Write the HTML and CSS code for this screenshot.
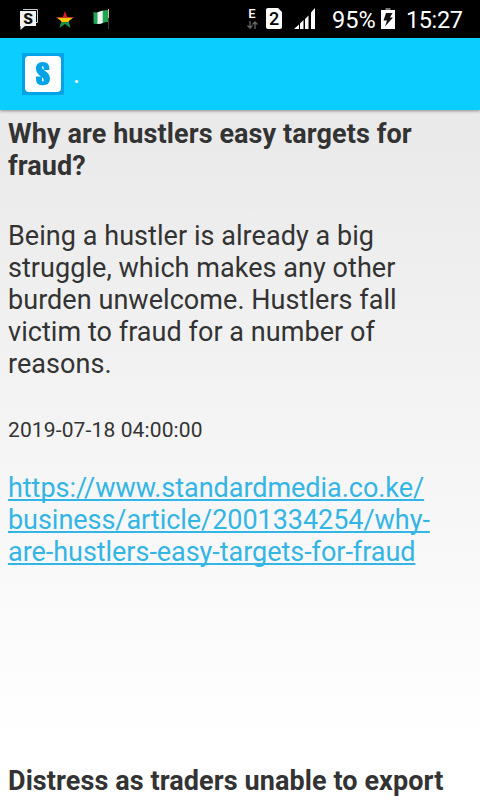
FILE: index.html
```html
<!DOCTYPE html>
<html lang="en">
<head>
  <meta charset="UTF-8" />
  <meta name="viewport" content="width=device-width, initial-scale=1" />
  <title>Business News</title>
  <link rel="stylesheet" href="styles.css">
</head>
<body>

  <div class="status-bar">
    <div class="notifications">
      <svg class="icon-news" width="18" height="21" viewBox="0 0 18 21">
        <path d="M3 0.5H17.5V13.5H16" fill="none" stroke="#ccc" stroke-width="1" />
        <path d="M0 2H16V17H5L0.5 21V17H0Z" fill="#f2f2f2" />
        <text x="8" y="15" text-anchor="middle">S</text>
      </svg>
      <svg class="icon-star" width="18" height="17" viewBox="0 0 18 17">
        <defs>
          <clipPath id="star">
            <path d="M9 0L11.2 6.1H18L12.6 10.2L14.6 17L9 12.9L3.4 17L5.4 10.2L0 6.1H6.8Z" />
          </clipPath>
        </defs>
        <g clip-path="url(#star)">
          <rect width="18" height="6.8" fill="#e01b24" />
          <rect y="6.8" width="18" height="4.4" fill="#f8c70a" />
          <rect y="11.2" width="18" height="6" fill="#17994a" />
        </g>
      </svg>
      <svg class="icon-flag" width="17" height="20" viewBox="0 0 17 20">
        <path d="M0.5 3Q4 4 7 2.5T15 1V13Q12 13 9 14.3T0.5 14.5Z" fill="#20a653" />
        <path d="M4.5 3.3Q7 2.9 9.7 1.6V14Q7 15.1 4.5 15Z" fill="#f1f5f1" />
        <path d="M15.5 0V9" stroke="#cdb98a" />
        <path d="M15.5 9V20" stroke="#40392c" />
      </svg>
    </div>

    <div class="system">
      <div class="network">
        <span>E</span>
        <svg width="11" height="8" viewBox="0 0 11 8">
          <path d="M3 0V7M0.5 4.5L3 7L5.5 4.5M8 8V1M5.5 3.5L8 1L10.5 3.5" fill="none" stroke="#666" stroke-width="1.3" />
        </svg>
      </div>
      <svg class="icon-sim" width="16" height="21" viewBox="0 0 16 21">
        <path d="M2 0H12L16 4V19Q16 21 14 21H2Q0 21 0 19V2Q0 0 2 0Z" fill="#fff" />
        <text x="8" y="16.7" text-anchor="middle">2</text>
      </svg>
      <svg class="icon-signal" width="22" height="21" viewBox="0 0 22 21">
        <path d="M0 21L5 16.5V21ZM6 15.5L9.5 12V21H6ZM11 11L14.5 7.5V21H11ZM17 4.5L21 0V21H17Z" fill="#fff" />
      </svg>
      <span class="battery-level">95%</span>
      <svg class="icon-battery" width="14" height="21" viewBox="0 0 14 21">
        <rect x="4.5" width="5" height="2" fill="#777" />
        <rect y="2" width="14" height="19" fill="#fff" />
        <path d="M5 5H11.5L9 9.5H12L4 18.5L6 12.5H2.5Z" fill="#111" />
      </svg>
      <span class="clock">15:27</span>
    </div>
  </div>

  <header>
    <svg class="logo" width="42" height="42" viewBox="0 0 42 42">
      <rect width="42" height="42" fill="#00a2e8" />
      <rect x="3" y="3" width="36" height="36" rx="4" fill="#fff" />
      <path d="M27.3 17H21.6V14.5Q21.6 13 20.8 13T20 14.5Q20 16 22.5 17.5Q28 21 28 25.5Q28 32.3 20.7 32.3Q14 32.3 14 26V23.5H20V27Q20 28.5 20.9 28.5T21.8 27Q21.8 25 18.5 23Q14 20 14 15.5Q14 9 20.7 9Q27.3 9 27.3 15Z" fill="#00a2e8" />
    </svg>
    <span class="title">.</span>
  </header>

  <main>
    <article>
      <h2>Why are hustlers easy targets for fraud?</h2>
      <p class="summary">Being a hustler is already a big struggle, which makes any other burden unwelcome. Hustlers fall victim to fraud for a number of reasons.</p>
      <p class="date">2019-07-18 04:00:00</p>
      <a class="link" href="https://www.standardmedia.co.ke/business/article/2001334254/why-are-hustlers-easy-targets-for-fraud">https://www.standardmedia.co.ke/<wbr>business/article/2001334254/why-<wbr>are-hustlers-easy-targets-for-fraud</a>
    </article>
    <article>
      <h2>Distress as traders unable to export</h2>
    </article>
  </main>

</body>
</html>
```
FILE: styles.css
```css
* {
  box-sizing: border-box;
}
body {
  margin: 0;
  height: 800px;
  overflow: hidden;
  display: flex;
  flex-direction: column;
  font-family: Roboto, sans-serif;
  color: #333;
  background: #fff;
}
svg {
  display: block;
  flex-shrink: 0;
}

/* Status bar */
.status-bar {
  height: 38px;
  flex-shrink: 0;
  display: flex;
  justify-content: space-between;
  padding: 0 17px 0 20px;
  background: #000;
  color: #fff;
}
.notifications, .system {
  display: flex;
  align-items: flex-start;
}
.icon-news {
  margin-top: 9px;
}
.icon-news text {
  font-size: 15.5px;
  font-weight: 900;
  fill: #111;
}
.icon-star {
  margin: 11px 0 0 18px;
}
.icon-flag {
  margin: 9px 0 0 19px;
}
.network {
  width: 12px;
  margin: 6px 8px 0 0;
  display: flex;
  flex-direction: column;
  align-items: center;
  font-size: 13px;
  font-weight: 500;
  line-height: 15px;
}
.icon-sim {
  margin-top: 8px;
}
.icon-sim text {
  font-size: 18px;
  font-weight: 500;
  fill: #000;
}
.icon-signal {
  margin: 8px 0 0 12px;
}
.battery-level, .clock {
  font-size: 23.5px;
  line-height: 40px;
  white-space: nowrap;
}
.battery-level {
  width: 44px;
  margin-left: 16px;
}
.icon-battery {
  margin: 8px 0 0 5px;
}
.clock {
  width: 57px;
  margin-left: 11px;
  letter-spacing: -0.4px;
}

/* App header */
header {
  height: 72px;
  flex-shrink: 0;
  display: flex;
  align-items: center;
  padding-left: 22px;
  background: #0bcdff;
  box-shadow: 0 1px 3px rgba(0, 0, 0, 0.4);
  z-index: 1;
}
.title {
  margin-left: 9px;
  font-size: 27px;
  color: #fff;
}

/* News list */
main {
  flex: 1;
  min-height: 0;
  padding: 8px;
  overflow: hidden;
  background: linear-gradient(#e9e9e9, #fff 92%);
}
article {
  height: 647px;
}
h2, .summary, .link {
  margin: 0;
  font-size: 27px;
  line-height: 32px;
}
h2 {
  font-weight: bold;
  letter-spacing: 0.09px;
}
.summary {
  margin-top: 38px;
  letter-spacing: 0.05px;
}
.date {
  margin: 37px 0 29px;
  font-size: 21px;
  line-height: 26px;
  letter-spacing: 0.13px;
}
.link {
  display: block;
  color: #33b5e5;
  letter-spacing: -0.04px;
  text-decoration-thickness: 2px;
  text-decoration-skip-ink: none;
  text-underline-offset: 2px;
}
```
